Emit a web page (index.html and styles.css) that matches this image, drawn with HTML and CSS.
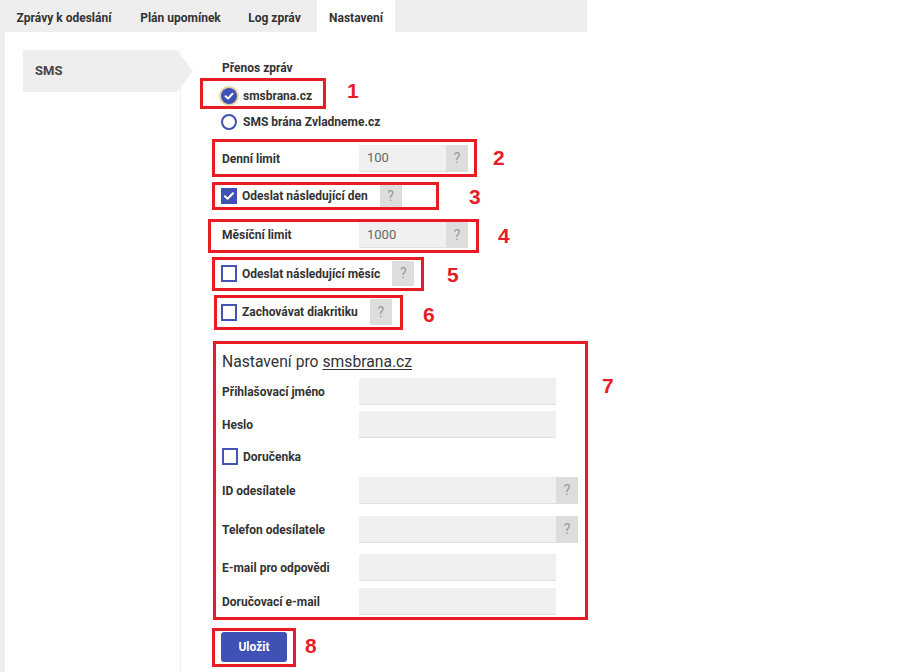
FILE: index.html
```html
<!DOCTYPE html>
<html lang="cs">
<head>
<meta charset="utf-8">
<title>Nastavení</title>
<link rel="stylesheet" href="styles.css">
</head>
<body>
<div class="app">
  <nav class="tabs">
    <a class="tab t1">Zprávy k odeslání</a>
    <a class="tab t2">Plán upomínek</a>
    <a class="tab t3">Log zpráv</a>
    <a class="tab t4 active">Nastavení</a>
  </nav>
  <div class="content">
    <aside class="sidebar">
      <div class="side-item">SMS</div>
    </aside>
    <form class="form">
      <div class="group-title">Přenos zpráv</div>

      <div class="ann-row row-1">
        <div class="ann b1">
          <label class="radio"><span class="radio-dot checked"><svg viewBox="0 0 16 16" width="16" height="16"><polyline points="4.5,8.3 7,10.6 11.5,5.8" fill="none" stroke="#fff" stroke-width="2" stroke-linecap="round" stroke-linejoin="round"/></svg></span>smsbrana.cz</label>
        </div>
        <span class="num n1">1</span>
      </div>
      <label class="radio r2"><span class="radio-dot"></span>SMS brána Zvladneme.cz</label>

      <div class="ann-row row-2">
        <div class="ann b2">
          <span class="field-label">Denní limit</span>
          <span class="input small">100</span>
          <span class="help">?</span>
        </div>
        <span class="num n2">2</span>
      </div>

      <div class="ann-row row-3">
        <div class="ann b3">
          <span class="check checked"><svg viewBox="0 0 16 16" width="16" height="16"><polyline points="3.8,8.2 6.6,10.8 12,5.2" fill="none" stroke="#fff" stroke-width="2" stroke-linecap="round" stroke-linejoin="round"/></svg></span>
          <span class="check-label">Odeslat následující den</span>
          <span class="help h22">?</span>
        </div>
        <span class="num n3">3</span>
      </div>

      <div class="ann-row row-4">
        <div class="ann b4">
          <span class="field-label">Měsíční limit</span>
          <span class="input small h26">1000</span>
          <span class="help h26">?</span>
        </div>
        <span class="num n4">4</span>
      </div>

      <div class="ann-row row-5">
        <div class="ann b5">
          <span class="check"></span>
          <span class="check-label">Odeslat následující měsíc</span>
          <span class="help h25">?</span>
        </div>
        <span class="num n5">5</span>
      </div>

      <div class="ann-row row-6">
        <div class="ann b6">
          <span class="check"></span>
          <span class="check-label">Zachovávat diakritiku</span>
          <span class="help h26">?</span>
        </div>
        <span class="num n6">6</span>
      </div>

      <div class="ann-row row-7">
        <div class="ann b7">
          <div class="section-title">Nastavení pro <u>smsbrana.cz</u></div>
          <div class="frow fr-1"><span class="field-label">Přihlašovací jméno</span><span class="input wide"></span></div>
          <div class="frow fr-2"><span class="field-label">Heslo</span><span class="input wide"></span></div>
          <div class="frow fr-3"><span class="check"></span><span class="check-label">Doručenka</span></div>
          <div class="frow fr-4"><span class="field-label">ID odesílatele</span><span class="input wide"></span><span class="help">?</span></div>
          <div class="frow fr-5"><span class="field-label">Telefon odesílatele</span><span class="input wide"></span><span class="help">?</span></div>
          <div class="frow fr-6"><span class="field-label">E-mail pro odpovědi</span><span class="input wide"></span></div>
          <div class="frow fr-7"><span class="field-label">Doručovací e-mail</span><span class="input wide"></span></div>
        </div>
        <span class="num n7">7</span>
      </div>

      <div class="ann-row row-8">
        <div class="ann b8">
          <button type="button" class="btn">Uložit</button>
        </div>
        <span class="num n8">8</span>
      </div>
    </form>
  </div>
</div>
</body>
</html>
```

FILE: styles.css
```css
* { box-sizing: border-box; }

body {
  margin: 0;
  background: #fff;
  font-family: Roboto, "Liberation Sans", sans-serif;
  color: #333;
}

.app {
  width: 587px;
  min-height: 672px;
  background: #eee;
  padding-left: 5px;
  display: flex;
  flex-direction: column;
}

/* tabs */
.tabs {
  height: 32px;
  display: flex;
  margin-left: -5px;
  padding-left: 4px;
}

.tab {
  display: block;
  text-align: center;
  white-space: nowrap;
  line-height: 36px;
  font-size: 12px;
  font-weight: 700;
  color: #333;
}

.t1 { width: 120px; }
.t2 { width: 105px; margin-left: 4px; }
.t3 { width: 77px; margin-left: 3px; }
.t4 { width: 78px; margin-left: 4px; }

.tab.active { background: #fff; }

/* content */
.content {
  flex: 1;
  background: #fff;
  display: flex;
  padding: 18px 0 0 18px;
}

.sidebar {
  width: 158px;
  flex-shrink: 0;
  border-right: 1px solid #f1f1f1;
}

.side-item {
  position: relative;
  width: 154px;
  height: 42px;
  background: #eee;
  padding-left: 12px;
  line-height: 42px;
  font-size: 13px;
  font-weight: 700;
  color: #444;
}

.side-item::after {
  content: "";
  position: absolute;
  left: 100%;
  top: 0;
  border-left: 16px solid #eee;
  border-top: 21px solid transparent;
  border-bottom: 21px solid transparent;
}

.form {
  margin-left: 19px;
  display: flex;
  flex-direction: column;
  align-items: flex-start;
  font-size: 12px;
  font-weight: 700;
}

.group-title {
  margin: 11px 0 0 22px;
  line-height: 14px;
}

/* annotation boxes */
.ann-row {
  display: flex;
  align-items: flex-start;
}

.ann {
  border: 3px solid #e81c24;
  display: flex;
  align-items: center;
}

.num {
  color: #e81c24;
  font-family: "Liberation Sans", Arial, sans-serif;
  font-weight: 700;
  font-size: 21px;
  line-height: 1;
}

.row-1 { margin-top: 3px; }
.b1 { width: 126px; height: 31px; padding: 7px 0 0 18px; align-items: flex-start; }
.n1 { margin: 2px 0 0 21px; }

.r2 { margin: 5px 0 0 21px; }

.row-2 { margin: 9px 0 0 12px; }
.b2 { width: 265px; height: 38px; padding: 3px 6px 2px 7px; }
.n2 { margin: 8px 0 0 16px; }

.row-3 { margin: 5px 0 0 12px; }
.b3 { width: 227px; height: 28px; padding: 0 0 0 6px; }
.n3 { margin: 4px 0 0 30px; }

.row-4 { margin: 9px 0 0 8px; }
.b4 { width: 271px; height: 34px; padding: 0 8px 2px 11px; }
.n4 { margin: 6px 0 0 19px; }

.row-5 { margin: 4px 0 0 12px; }
.b5 { width: 212px; height: 34px; padding: 1px 0 2px 6px; }
.n5 { margin: 7px 0 0 23px; }

.row-6 { margin: 4px 0 0 14px; }
.b6 { width: 189px; height: 35px; padding: 1px 0 2px 4px; }
.n6 { margin: 9px 0 0 20px; }

.row-7 { margin: 11px 0 0 13px; }
.b7 {
  width: 375px;
  height: 279px;
  padding: 8px 0 0 6px;
  flex-direction: column;
  align-items: flex-start;
}
.n7 { margin: 34px 0 0 14px; }

.row-8 { margin: 8px 0 0 12px; }
.b8 { width: 84px; height: 39px; padding: 1px 0 0 6px; align-items: flex-start; }
.n8 { margin: 7px 0 0 9px; }

/* controls */
.radio {
  display: flex;
  align-items: center;
  gap: 6px;
  line-height: 16px;
}

.radio-dot {
  width: 16px;
  height: 16px;
  border-radius: 50%;
  border: 2px solid #3f51b5;
  background: #fff;
  display: block;
  flex-shrink: 0;
}

.radio-dot.checked {
  border: 0;
  background: #3f51b5;
  box-shadow: 0 0 1px 2px rgba(221, 196, 128, 0.75);
}

.radio-dot svg { display: block; }

.check {
  width: 16px;
  height: 17px;
  border: 2px solid #4353b8;
  background: #fff;
  flex-shrink: 0;
  display: block;
}

.check.checked {
  border: 0;
  background: #3f51b5;
  height: 16px;
}

.check svg { display: block; }

.check-label {
  margin-left: 5px;
  line-height: 16px;
}

.b3 .help, .b5 .help, .b6 .help { margin-left: 12px; }

.field-label {
  width: 137px;
  flex-shrink: 0;
  line-height: 16px;
}

.input {
  display: block;
  height: 27px;
  background: #f0f0f0;
  border-bottom: 1px solid #e0e0e0;
  padding-left: 8px;
  line-height: 26px;
  font-size: 13px;
  font-weight: 400;
  color: #666;
}

.input.small { width: 87px; }
.input.wide { width: 197px; }
.input.h26 { height: 26px; line-height: 25px; }

.help {
  display: block;
  width: 22px;
  height: 27px;
  background: #ddd;
  color: #999;
  text-align: center;
  font-size: 14px;
  font-weight: 400;
  line-height: 27px;
}

.help.h22 { height: 22px; line-height: 22px; }
.help.h25 { height: 25px; line-height: 25px; }
.help.h26 { height: 26px; line-height: 26px; }

.section-title {
  font-size: 15.7px;
  font-weight: 400;
  line-height: 20px;
  color: #333;
}

.section-title u { text-decoration-thickness: 1px; text-underline-offset: 2px; }

.frow {
  display: flex;
  align-items: center;
}

.fr-1 { margin-top: 6px; }
.fr-2 { margin-top: 6px; }
.fr-3 { margin-top: 10px; }
.fr-4 { margin-top: 12px; }
.fr-5 { margin-top: 12px; }
.fr-6 { margin-top: 11px; }
.fr-7 { margin-top: 7px; }

.btn {
  width: 66px;
  height: 30px;
  border: 0;
  border-radius: 3px;
  background: #3f51b5;
  color: #fff;
  font-family: Roboto, "Liberation Sans", sans-serif;
  font-size: 12px;
  font-weight: 700;
  padding: 0;
}
```
